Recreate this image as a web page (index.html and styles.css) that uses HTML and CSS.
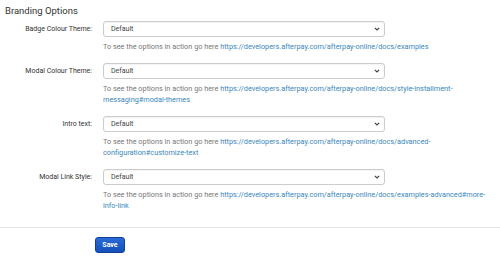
FILE: index.html
```html
<!DOCTYPE html>
<html lang="en">
<head>
    <meta charset="UTF-8">
    <title>Branding Options</title>
    <link rel="stylesheet" href="styles.css">
</head>
<body>
    <div class="panel">
        <h2>Branding Options</h2>

        <div class="row">
            <label class="label">Badge Colour Theme:</label>
            <div class="field">
                <div class="select">
                    <span>Default</span>
                    <svg class="chev" width="6" height="4" viewBox="0 0 6 4"><path d="M0.8 0.8 L3 3 L5.2 0.8" fill="none" stroke="#444" stroke-width="1.2"/></svg>
                </div>
                <p class="help">To see the options in action go here <a href="#">https://developers.afterpay.com/afterpay-online/docs/examples</a></p>
            </div>
        </div>

        <div class="row">
            <label class="label">Modal Colour Theme:</label>
            <div class="field">
                <div class="select">
                    <span>Default</span>
                    <svg class="chev" width="6" height="4" viewBox="0 0 6 4"><path d="M0.8 0.8 L3 3 L5.2 0.8" fill="none" stroke="#444" stroke-width="1.2"/></svg>
                </div>
                <p class="help">To see the options in action go here <a href="#">https://developers.afterpay.com/afterpay-online/docs/style-installment-messaging#modal-themes</a></p>
            </div>
        </div>

        <div class="row">
            <label class="label">Intro text:</label>
            <div class="field">
                <div class="select">
                    <span>Default</span>
                    <svg class="chev" width="6" height="4" viewBox="0 0 6 4"><path d="M0.8 0.8 L3 3 L5.2 0.8" fill="none" stroke="#444" stroke-width="1.2"/></svg>
                </div>
                <p class="help">To see the options in action go here <a href="#">https://developers.afterpay.com/afterpay-online/docs/advanced-configuration#customize-text</a></p>
            </div>
        </div>

        <div class="row">
            <label class="label">Modal Link Style:</label>
            <div class="field">
                <div class="select">
                    <span>Default</span>
                    <svg class="chev" width="6" height="4" viewBox="0 0 6 4"><path d="M0.8 0.8 L3 3 L5.2 0.8" fill="none" stroke="#444" stroke-width="1.2"/></svg>
                </div>
                <p class="help">To see the options in action go here <a href="#">https://developers.afterpay.com/afterpay-online/docs/examples-advanced#more-info-link</a></p>
            </div>
        </div>
    </div>

    <div class="actions">
        <button class="btn">Save</button>
    </div>
</body>
</html>
```

FILE: styles.css
```css
* { margin: 0; padding: 0; box-sizing: border-box; }

body {
    font-family: Roboto, 'Liberation Sans', sans-serif;
    background: #fff;
    color: #333;
    width: 500px;
    height: 260px;
    overflow: hidden;
}

.panel {
    padding: 3px 8px 0 5px;
    border-bottom: 1px solid #e5e5e5;
    height: 228px;
}

h2 {
    font-size: 9.5px;
    font-weight: 400;
    line-height: 16px;
    color: #333;
    margin-bottom: 2px;
}

.row {
    display: flex;
    align-items: flex-start;
    margin-bottom: 11px;
}

.label {
    width: 87px;
    text-align: right;
    font-size: 7px;
    line-height: 16px;
    color: #333;
}

.field {
    margin-left: 11px;
    flex: 1;
}

.select {
    width: 282px;
    height: 16px;
    border: 1px solid #ccc;
    border-radius: 3px;
    display: flex;
    justify-content: space-between;
    align-items: center;
    padding: 0 4px 0 7px;
    font-size: 7px;
    color: #444;
    box-shadow: inset 0 1px 1px rgba(0, 0, 0, 0.05);
}

.help {
    margin-top: 4px;
    font-size: 7.3px;
    line-height: 11px;
    color: #777;
}

.help a {
    color: #3b87c0;
    text-decoration: none;
}

.actions {
    padding: 9px 0 0 95px;
}

.btn {
    display: block;
    font-family: Roboto, 'Liberation Sans', sans-serif;
    font-size: 7px;
    font-weight: 700;
    color: #fff;
    width: 30px;
    height: 16px;
    border: 1px solid #0d3f99;
    border-radius: 3px;
    background: linear-gradient(#2a6ad6, #1450b8);
}
```
